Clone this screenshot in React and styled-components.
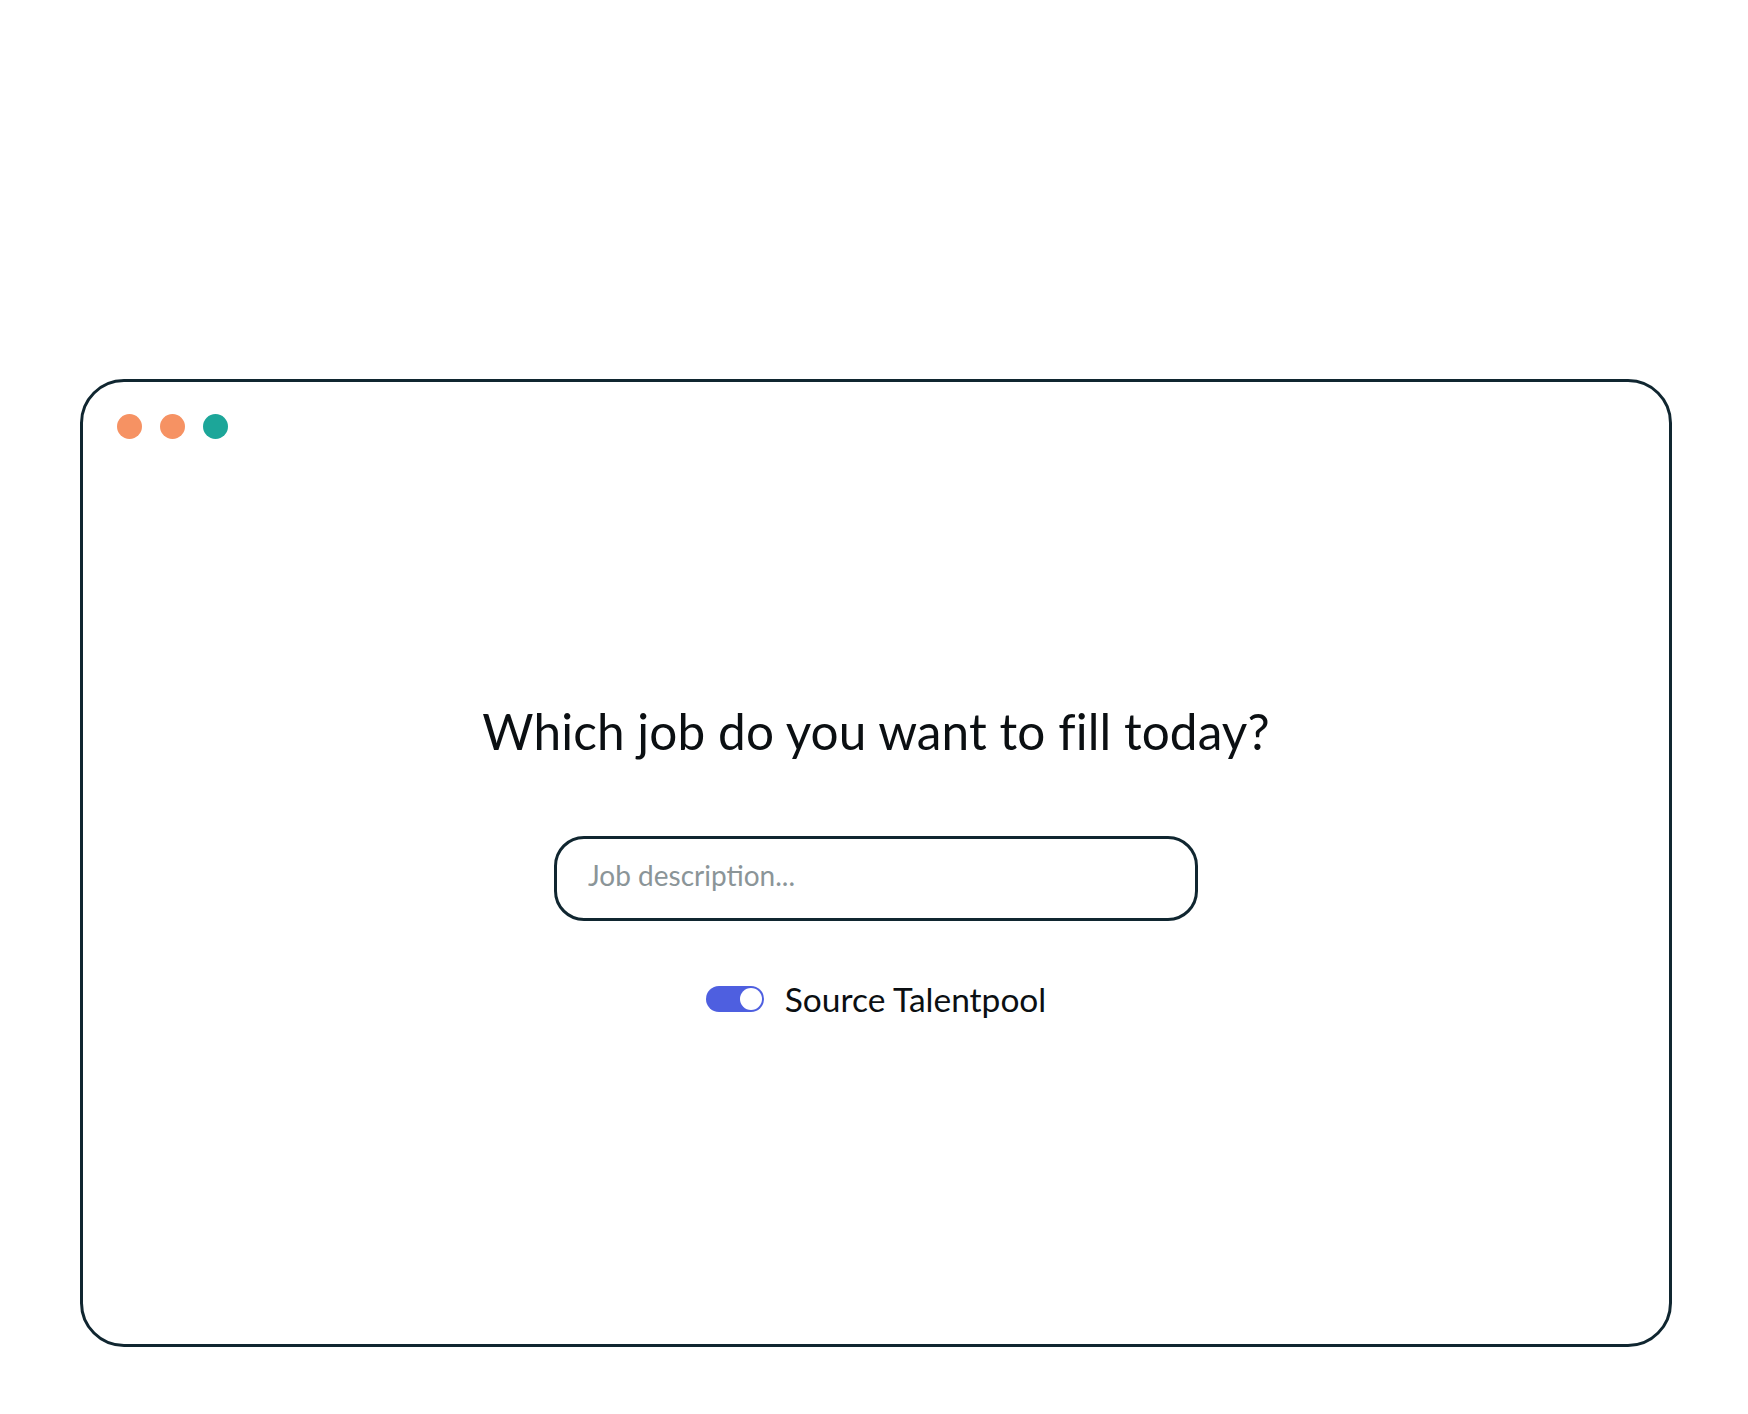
import React, { useState } from 'react';
import styled, { createGlobalStyle } from 'styled-components';

const GlobalStyle = createGlobalStyle`
  html, body {
    margin: 0;
    padding: 0;
    background: #ffffff;
  }
  body {
    font-family: Lato, "Noto Sans", "Liberation Sans", sans-serif;
    color: #0b0f12;
  }
`;

const Page = styled.div`
  width: 1748px;
  height: 1414px;
  padding-top: 379px;
  padding-left: 80px;
  box-sizing: border-box;
`;

const Window = styled.div`
  width: 1592px;
  height: 968px;
  box-sizing: border-box;
  border: 3px solid #102630;
  border-radius: 44px;
  display: flex;
  flex-direction: column;
`;

const TitleBar = styled.div`
  display: flex;
  align-items: center;
  gap: 18px;
  padding: 32px 0 0 34px;
  height: 25px;
`;

const Dot = styled.span`
  width: 25px;
  height: 25px;
  border-radius: 50%;
  background: ${({ color }) => color};
`;

const Body = styled.div`
  flex: 1;
  display: flex;
  flex-direction: column;
  align-items: center;
  justify-content: center;
  padding-bottom: 64px;
`;

const Title = styled.h1`
  margin: 0;
  font-size: 49.5px;
  font-weight: 400;
  line-height: 54px;
  letter-spacing: 0.1px;
  color: #0b0f12;
`;

const SearchBox = styled.input`
  margin-top: 78px;
  width: 644px;
  height: 85px;
  box-sizing: border-box;
  border: 3px solid #102630;
  border-radius: 30px;
  padding: 0 30px 6px 31px;
  font-family: inherit;
  font-size: 28px;
  color: #0b0f12;
  outline: none;
  background: #fff;

  &::placeholder {
    color: #8b9598;
  }
`;

const ToggleRow = styled.label`
  margin-top: 61px;
  display: flex;
  align-items: center;
  gap: 21px;
  cursor: pointer;
`;

const Track = styled.span`
  position: relative;
  width: 58px;
  height: 26px;
  border-radius: 13px;
  background: ${({ on }) => (on ? '#4e5fe0' : '#c9ced6')};
  transition: background 0.2s;
`;

const Knob = styled.span`
  position: absolute;
  top: 2px;
  left: ${({ on }) => (on ? '34px' : '2px')};
  width: 22px;
  height: 22px;
  border-radius: 50%;
  background: #ffffff;
  transition: left 0.2s;
`;

const Label = styled.span`
  font-size: 33.5px;
  line-height: 34px;
  color: #0b0f12;
`;

export default function App() {
  const [on, setOn] = useState(true);
  const [value, setValue] = useState('');

  return (
    <>
      <GlobalStyle />
      <Page>
        <Window>
          <TitleBar>
            <Dot color="#f69263" />
            <Dot color="#f69263" />
            <Dot color="#1ca699" />
          </TitleBar>
          <Body>
            <Title>Which job do you want to fill today?</Title>
            <SearchBox
              placeholder="Job description..."
              value={value}
              onChange={(e) => setValue(e.target.value)}
            />
            <ToggleRow onClick={() => setOn(!on)}>
              <Track on={on}>
                <Knob on={on} />
              </Track>
              <Label>Source Talentpool</Label>
            </ToggleRow>
          </Body>
        </Window>
      </Page>
    </>
  );
}
